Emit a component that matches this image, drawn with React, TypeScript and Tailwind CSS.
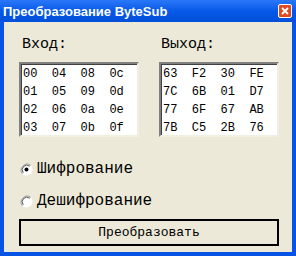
import React, { FC } from "react";

const inRows = ["00  04  08  0c", "01  05  09  0d", "02  06  0a  0e", "03  07  0b  0f"];
const outRows = ["63  F2  30  FE", "7C  6B  01  D7", "77  6F  67  AB", "7B  C5  2B  76"];

const mono = "font-['Liberation_Mono','Courier_New',monospace]";

const HexBox: FC<{ rows: string[] }> = ({ rows }) => (
  <div className="w-[120px] h-[75px] bg-white border-2 border-t-[#808080] border-l-[#808080] border-b-[#f1efe2] border-r-[#f1efe2] shadow-[inset_1px_1px_0_#404040] overflow-hidden pl-[2px] pt-[1px]">
    {rows.map((r) => (
      <div key={r} className={`${mono} text-[12px] leading-[18px] text-black whitespace-pre`}>
        {r}
      </div>
    ))}
  </div>
);

const Radio: FC<{ checked?: boolean; label: string }> = ({ checked, label }) => (
  <div className="flex items-center h-[16px]">
    <svg width="13" height="13" viewBox="0 0 13 13" className="shrink-0">
      <circle cx="6.5" cy="6.5" r="6" fill="#ffffff" />
      <path d="M10.7 2.3 A6 6 0 0 0 2.3 10.7" fill="none" stroke="#9a9890" strokeWidth="1" />
      <path d="M9.8 3.2 A4.7 4.7 0 0 0 3.2 9.8" fill="none" stroke="#505050" strokeWidth="1" />
      {checked && <circle cx="6.5" cy="6.5" r="2" fill="#000000" />}
    </svg>
    <span className={`${mono} text-[16px] leading-[16px] text-black ml-[4px]`}>{label}</span>
  </div>
);

const App: FC = () => {
  return (
    <div className="w-[296px] h-[256px] bg-[#0653e6] flex flex-col overflow-hidden">
      <div className="h-[22px] shrink-0 flex items-center justify-between pl-[3px] pr-[4px] bg-gradient-to-b from-[#2a78f8] via-[#0558e8] to-[#0350da]">
        <span className="font-['Liberation_Sans',Arial,sans-serif] font-bold text-[13px] text-white leading-none">
          Преобразование ByteSub
        </span>
        <div className="w-[14px] h-[14px] rounded-[2px] border border-white bg-[#e04a22] flex items-center justify-center">
          <svg width="8" height="8" viewBox="0 0 8 8">
            <path d="M1 1 L7 7 M7 1 L1 7" stroke="#ffffff" strokeWidth="1.8" />
          </svg>
        </div>
      </div>
      <div className="flex-1 mx-[4px] mb-[4px] bg-[#ece9d8] pl-[15px] pt-[15px] flex flex-col">
        <div className="flex gap-[20px]">
          <div className="flex flex-col">
            <span className={`${mono} text-[15px] leading-[16px] text-black pl-[3px] h-[25px]`}>Вход:</span>
            <HexBox rows={inRows} />
          </div>
          <div className="flex flex-col">
            <span className={`${mono} text-[15px] leading-[16px] text-black pl-[2px] h-[25px]`}>Выход:</span>
            <HexBox rows={outRows} />
          </div>
        </div>
        <div className="mt-[24px] pl-[1px]">
          <Radio checked label="Шифрование" />
        </div>
        <div className="mt-[16px] pl-[1px]">
          <Radio label="Дешифрование" />
        </div>
        <button className="mt-[10px] w-[260px] h-[27px] border-2 border-black bg-[#ece9d8] flex items-center justify-center">
          <span className={`${mono} text-[13px] text-black leading-none`}>Преобразовать</span>
        </button>
      </div>
    </div>
  );
};

export default App;
